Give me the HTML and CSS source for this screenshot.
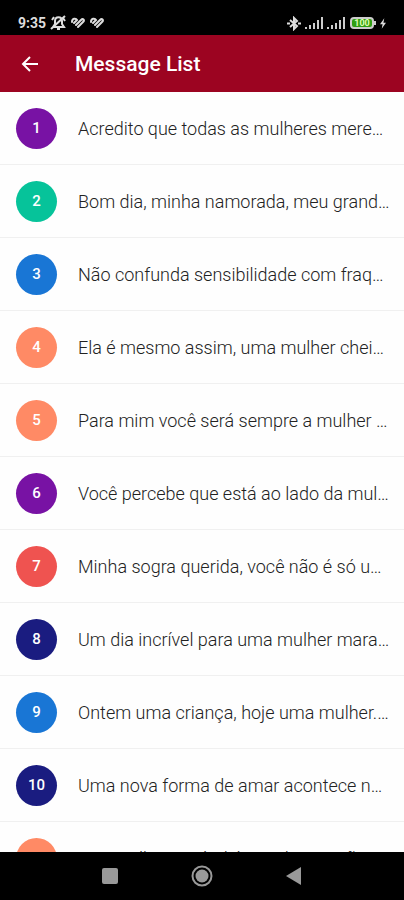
FILE: index.html
```html
<!DOCTYPE html>
<html lang="pt">
  <head>
    <meta charset="UTF-8" />
    <meta name="viewport" content="width=device-width, initial-scale=1" />
    <title>Message List</title>
    <link rel="stylesheet" href="styles.css">
  </head>
  <body>
    <div class="status-bar">
      <div class="status-left">
        <span class="clock">9:35</span>
        <svg class="icon-mute" width="17" height="16" viewBox="0 0 17 16" fill="none" stroke="#ddd" stroke-width="2">
          <path d="M3 12h11l-2-3V6c0-5-7-5-7 0v3zM7 14h3M1 14L15 1M2 5l2-3M13 3l2 3" />
        </svg>
        <svg class="icon-heart" width="14" height="12" viewBox="0 0 14 12" fill="none" stroke="#ddd" stroke-width="2" stroke-linecap="round">
          <path d="M1 5c0-4 4-4 5-2L3 6M5 8l5-5c2-2 4 0 2 2l-5 5" />
        </svg>
        <svg class="icon-heart" width="14" height="12" viewBox="0 0 14 12" fill="none" stroke="#ddd" stroke-width="2" stroke-linecap="round">
          <path d="M1 5c0-4 4-4 5-2L3 6M5 8l5-5c2-2 4 0 2 2l-5 5" />
        </svg>
      </div>
      <div class="status-right">
        <svg width="14" height="15" viewBox="0 0 14 15" fill="none" stroke="#ddd" stroke-width="2">
          <path d="M3 4l7 6-3 3V2l3 3-7 6" />
          <path d="M0 7.500h3M11 7.500h3" />
        </svg>
        <svg width="18" height="12" viewBox="0 0 18 12" fill="#ccc">
          <path d="M0 10h2v2H0zM4 8h2v4H4zM8 6h2v6H8zM12 3h2v9h-2zM16 0h2v12h-2z" />
        </svg>
        <svg width="18" height="12" viewBox="0 0 18 12" fill="#ccc">
          <path d="M0 10h2v2H0zM4 8h2v4H4zM8 6h2v6H8zM12 3h2v9h-2zM16 0h2v12h-2z" />
        </svg>
        <div class="battery"><span class="battery-level">100</span></div>
        <svg width="6" height="11" viewBox="0 0 7 12" fill="#ddd">
          <path d="M5 0L0 7h3l-1 5 5-7H4z" />
        </svg>
      </div>
    </div>

    <header class="header">
      <button class="back-btn" type="button" aria-label="Voltar">
        <svg width="18" height="18" viewBox="0 0 18 18" fill="none" stroke="#fff" stroke-width="2">
          <path d="M18 9H3M10 2L3 9l7 7" />
        </svg>
      </button>
      <h1 class="title">Message List</h1>
    </header>

    <ul class="message-list">
      <li><a class="message" href="#"><span class="badge purple">1</span><span class="message-text">Acredito que todas as mulheres mere…</span></a></li>
      <li><a class="message" href="#"><span class="badge green">2</span><span class="message-text">Bom dia, minha namorada, meu grand…</span></a></li>
      <li><a class="message" href="#"><span class="badge blue">3</span><span class="message-text">Não confunda sensibilidade com fraq…</span></a></li>
      <li><a class="message" href="#"><span class="badge orange">4</span><span class="message-text">Ela é mesmo assim, uma mulher chei…</span></a></li>
      <li><a class="message" href="#"><span class="badge orange">5</span><span class="message-text">Para mim você será sempre a mulher …</span></a></li>
      <li><a class="message" href="#"><span class="badge purple">6</span><span class="message-text">Você percebe que está ao lado da mul…</span></a></li>
      <li><a class="message" href="#"><span class="badge red">7</span><span class="message-text">Minha sogra querida, você não é só u…</span></a></li>
      <li><a class="message" href="#"><span class="badge navy">8</span><span class="message-text">Um dia incrível para uma mulher mara…</span></a></li>
      <li><a class="message" href="#"><span class="badge blue">9</span><span class="message-text">Ontem uma criança, hoje uma mulher.…</span></a></li>
      <li><a class="message" href="#"><span class="badge navy">10</span><span class="message-text">Uma nova forma de amar acontece n…</span></a></li>
      <li><a class="message" href="#"><span class="badge orange">11</span><span class="message-text">Sou mulher incrível é aquela que não…</span></a></li>
    </ul>

    <nav class="nav-bar">
      <button class="nav-btn" type="button" aria-label="Recentes">
        <svg width="24" height="24" viewBox="0 0 24 24"><rect x="4" y="4" width="16" height="16" rx="2" fill="#999" /></svg>
      </button>
      <button class="nav-btn" type="button" aria-label="Início">
        <svg width="24" height="24" viewBox="0 0 24 24">
          <circle cx="12" cy="12" r="9.500" fill="none" stroke="#999" stroke-width="2" />
          <circle cx="12" cy="12" r="6.500" fill="#999" />
        </svg>
      </button>
      <button class="nav-btn" type="button" aria-label="Voltar">
        <svg width="24" height="24" viewBox="0 0 24 24"><path d="M19 3v18L4 12z" fill="#999" /></svg>
      </button>
    </nav>
  </body>
</html>
```
FILE: styles.css
```css
* {
  box-sizing: border-box;
}

body {
  margin: 0;
  height: 100vh;
  display: flex;
  flex-direction: column;
  font-family: Roboto, sans-serif;
  background: #fefefe;
}

button {
  background: none;
  border: none;
  padding: 0;
  cursor: pointer;
}

svg {
  display: block;
}

/* 상태바 */
.status-bar {
  flex: none;
  height: 35px;
  padding: 11px 18px 0;
  display: flex;
  justify-content: space-between;
  align-items: center;
  background: #000;
}

.status-left,
.status-right {
  display: flex;
  align-items: center;
  gap: 4px;
}

.icon-heart {
  margin-right: 1px;
}

.clock {
  color: #ddd;
  font-size: 14px;
  font-weight: 700;
}

.battery {
  position: relative;
  width: 24px;
  height: 12px;
  margin: 0 2px 0 1px;
  border: 2px solid #ccc;
  border-radius: 4px;
  background: #2f9e12;
  display: flex;
  align-items: center;
  justify-content: center;
}

.battery::after {
  content: "";
  position: absolute;
  right: -4px;
  top: 2px;
  width: 2px;
  height: 4px;
  background: #ccc;
}

.battery-level {
  color: #dfffb0;
  font-size: 9px;
  line-height: 8px;
  font-weight: 700;
}

/* 헤더 */
.header {
  flex: none;
  height: 57px;
  padding: 0 20px;
  display: flex;
  align-items: center;
  background: #9c0421;
}

.back-btn {
  width: 55px;
  padding: 10px 0;
}

.title {
  margin: 0;
  color: #fff;
  font-size: 21px;
  font-weight: 500;
}

/* 메시지 목록 */
.message-list {
  flex: 1;
  min-height: 0;
  margin: 0;
  padding: 0;
  list-style: none;
  overflow-y: auto;
  scrollbar-width: none;
}

.message {
  height: 73px;
  padding: 0 12px 0 16px;
  display: flex;
  align-items: center;
  gap: 21px;
  border-bottom: 1px solid #f0f0f0;
  color: #222;
  text-decoration: none;
}

.message-text {
  font-size: 18px;
  font-weight: 300;
  white-space: nowrap;
}

.badge {
  flex: none;
  width: 41px;
  height: 41px;
  border-radius: 50%;
  display: flex;
  justify-content: center;
  align-items: center;
  color: #fff;
  font-size: 15px;
  font-weight: 500;
}

.purple {
  background: #7812a4;
}

.green {
  background: #06c39a;
}

.blue {
  background: #1976d5;
}

.orange {
  background: #ff8a65;
}

.red {
  background: #ef5350;
}

.navy {
  background: #1a1c80;
}

/* 하단 내비게이션 */
.nav-bar {
  flex: none;
  height: 48px;
  display: flex;
  justify-content: center;
  align-items: center;
  gap: 68px;
  background: #000;
}
```
